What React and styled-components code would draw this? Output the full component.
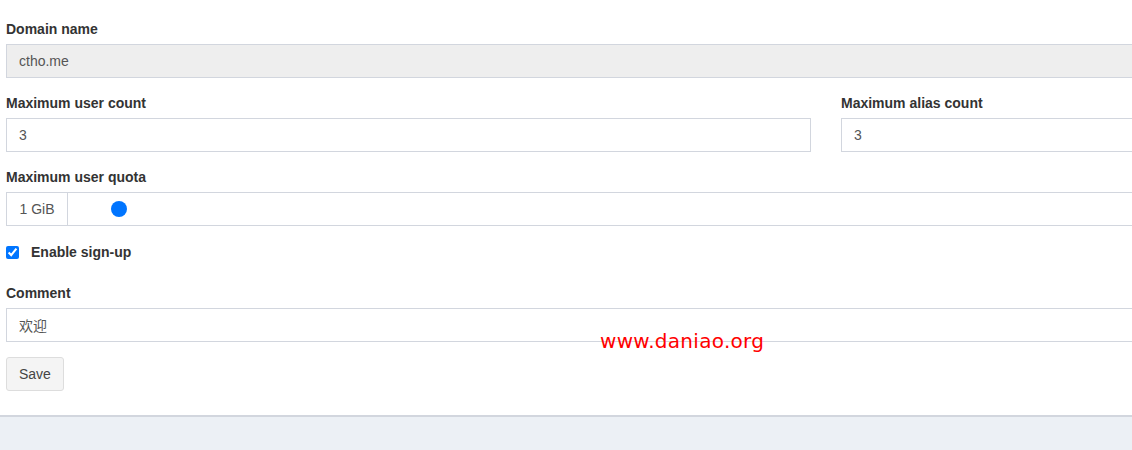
import styled, { createGlobalStyle } from "styled-components";

const GlobalStyle = createGlobalStyle`
  html, body {
    margin: 0;
    padding: 0;
    background: #ffffff;
    overflow: hidden;
    font-family: "Liberation Sans", Arial, "Noto Sans CJK SC", sans-serif;
    font-size: 14px;
    color: #333;
  }
`;

const Page = styled.div`
  position: relative;
  width: 1132px;
  height: 450px;
  overflow: hidden;
  display: flex;
  flex-direction: column;
`;

const Content = styled.div`
  padding: 19px 0 0 6px;
  width: 1222px;
  flex: 1;
`;

const Group = styled.div`
  margin-bottom: ${(p) => p.$mb ?? 15}px;
`;

const Row = styled.div`
  display: grid;
  grid-template-columns: 805px 1fr;
  column-gap: 30px;
`;

const Label = styled.label`
  display: block;
  font-weight: 700;
  font-size: 14px;
  line-height: 20px;
  color: #333;
  margin-bottom: 5px;
`;

const Input = styled.input`
  box-sizing: border-box;
  display: block;
  width: 100%;
  height: 34px;
  padding: 6px 12px;
  border: 1px solid #d2d6de;
  border-radius: 0;
  background: ${(p) => (p.disabled ? "#eeeeee" : "#ffffff")};
  color: #555;
  font-family: "Liberation Sans", Arial, "Noto Sans CJK SC", sans-serif;
  font-size: 14px;
  outline: none;
`;

const InputGroup = styled.div`
  display: flex;
  height: 34px;
  box-sizing: border-box;
  border: 1px solid #d2d6de;
`;

const Addon = styled.span`
  display: flex;
  align-items: center;
  justify-content: center;
  width: 60px;
  border-right: 1px solid #d2d6de;
  color: #555;
  font-size: 14px;
`;

const Slider = styled.div`
  flex: 1;
  display: flex;
  align-items: center;
  padding-left: 43px;
`;

const Thumb = styled.span`
  width: 16px;
  height: 16px;
  border-radius: 50%;
  background: #0075ff;
`;

const CheckRow = styled.label`
  display: flex;
  align-items: center;
  height: 22px;
  margin-bottom: 20px;
  font-weight: 700;
  color: #333;
`;

const Check = styled.input`
  width: 13px;
  height: 13px;
  margin: 0 12px 0 0;
  accent-color: #0075ff;
`;

const Button = styled.button`
  height: 34px;
  padding: 6px 12px;
  background: #f4f4f4;
  border: 1px solid #ddd;
  border-radius: 3px;
  color: #444;
  font-family: "Liberation Sans", Arial, sans-serif;
  font-size: 14px;
`;

const Footer = styled.footer`
  height: 33px;
  border-top: 2px solid #d2d6de;
  background: #ecf0f5;
`;

const Watermark = styled.div`
  position: absolute;
  left: 600px;
  top: 329px;
  color: #ff0000;
  font-family: "DejaVu Sans", "Noto Sans", sans-serif;
  font-size: 20px;
  letter-spacing: 0.3px;
`;

export default function App() {
  return (
    <Page>
      <GlobalStyle />
      <Content>
        <Group>
          <Label>Domain name</Label>
          <Input value="ctho.me" disabled readOnly />
        </Group>
        <Row>
          <Group>
            <Label>Maximum user count</Label>
            <Input defaultValue="3" />
          </Group>
          <Group>
            <Label>Maximum alias count</Label>
            <Input defaultValue="3" />
          </Group>
        </Row>
        <Group>
          <Label>Maximum user quota</Label>
          <InputGroup>
            <Addon>1 GiB</Addon>
            <Slider>
              <Thumb />
            </Slider>
          </InputGroup>
        </Group>
        <CheckRow>
          <Check type="checkbox" defaultChecked />
          Enable sign-up
        </CheckRow>
        <Group>
          <Label>Comment</Label>
          <Input defaultValue="欢迎" />
        </Group>
        <Button>Save</Button>
      </Content>
      <Footer />
      <Watermark>www.daniao.org</Watermark>
    </Page>
  );
}
